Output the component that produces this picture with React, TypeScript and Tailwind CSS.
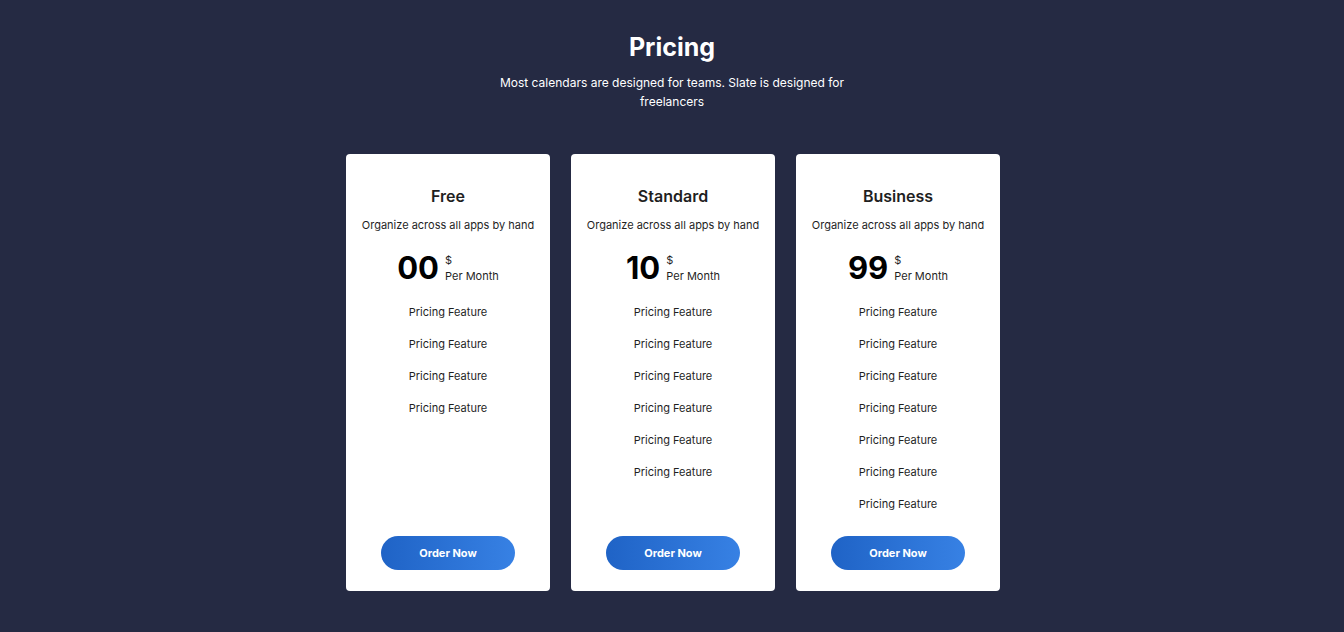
import React from "react";

const plans = [
  { name: "Free", price: "00", features: 4 },
  { name: "Standard", price: "10", features: 6 },
  { name: "Business", price: "99", features: 7 },
];

export default function App() {
  return (
    <div
      className="min-h-[632px] w-full bg-[#252a43] flex flex-col items-center pt-[32px]"
      style={{ fontFamily: "Inter, 'Noto Sans', sans-serif" }}
    >
      <h1 className="text-white text-[25px] font-bold leading-[30px]">Pricing</h1>
      <p className="text-white text-[12px] leading-[19px] text-center w-[350px] mt-[11px]">
        Most calendars are designed for teams. Slate is designed for freelancers
      </p>
      <div className="flex gap-[21px] mt-[43px] pl-[2px]">
        {plans.map((p) => (
          <div
            key={p.name}
            className="w-[204px] min-h-[437px] bg-white rounded-[4px] flex flex-col items-center pt-[31px] pb-[21px] text-[#1f1f1f]"
          >
            <div className="text-[16px] font-semibold leading-[22px]">{p.name}</div>
            <div className="text-[11px] leading-[14px] mt-[11px]">Organize across all apps by hand</div>
            <div className="flex items-center mt-[19px]">
              <span className="text-[31px] font-bold leading-[34px] text-black">{p.price}</span>
              <div className="flex flex-col ml-[6px] text-[11px] leading-[16px] mt-[0px]">
                <span>$</span>
                <span>Per Month</span>
              </div>
            </div>
            <div className="flex flex-col items-center gap-[18px] mt-[20px]">
              {Array.from({ length: p.features }).map((_, i) => (
                <div key={i} className="text-[11px] leading-[14px]">
                  Pricing Feature
                </div>
              ))}
            </div>
            <button className="mt-auto w-[134px] h-[34px] rounded-full bg-gradient-to-r from-[#1f63c6] to-[#3781e4] text-white text-[11px] font-bold">
              Order Now
            </button>
          </div>
        ))}
      </div>
    </div>
  );
}
